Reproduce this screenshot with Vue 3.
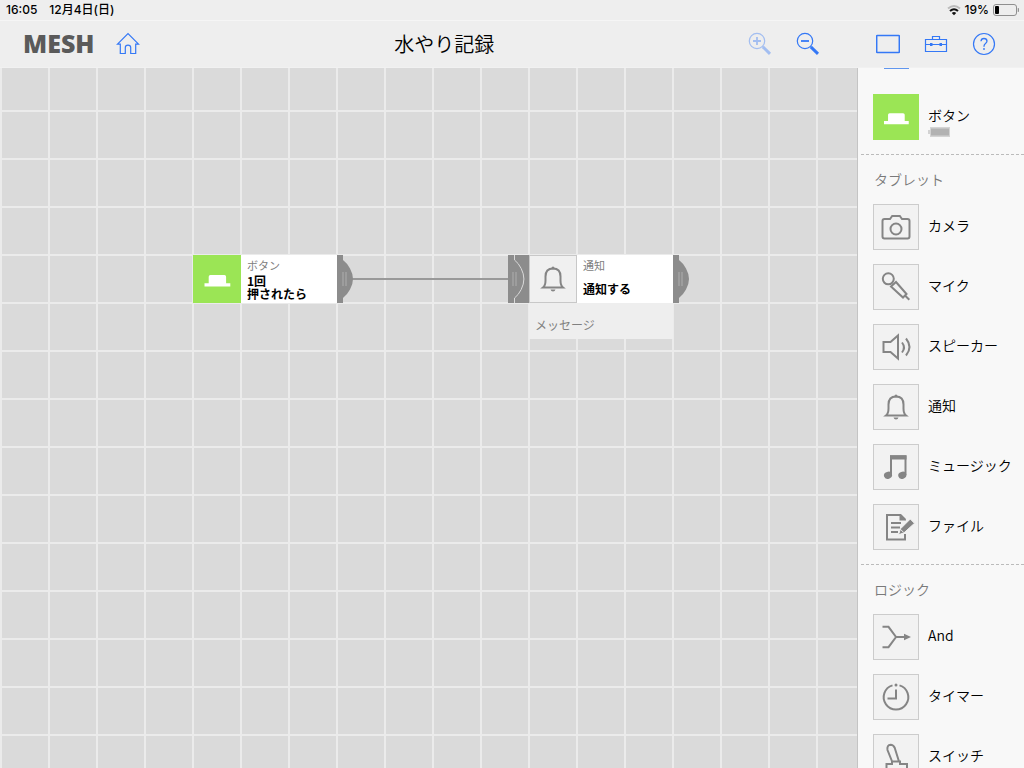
<script setup>
import { ref } from 'vue'

const sections = ref([
  {
    title: 'タブレット',
    items: [
      { icon: 'camera', name: 'カメラ' },
      { icon: 'mic', name: 'マイク' },
      { icon: 'speaker', name: 'スピーカー' },
      { icon: 'bell', name: '通知' },
      { icon: 'music', name: 'ミュージック' },
      { icon: 'file', name: 'ファイル' }
    ]
  },
  {
    title: 'ロジック',
    items: [
      { icon: 'and', name: 'And' },
      { icon: 'timer', name: 'タイマー' },
      { icon: 'switch', name: 'スイッチ' }
    ]
  }
])
</script>

<template>
  <div class="app">
    <!-- Shared symbols -->
    <svg class="symbols" width="0" height="0" aria-hidden="true">
      <symbol id="button-tag" viewBox="0 0 48 48">
        <path d="M11.500 28.300h4.200v-6.600q0-1.700 1.700-1.700h14q1.700 0 1.700 1.700v6.600h4.200v3.200h-25.800z" fill="#fff" />
      </symbol>
      <symbol id="camera" viewBox="0 0 46 46">
        <path d="M11.500 15h5.500l2.200-3h7.600l2.200 3h5.500q2 0 2 2v15.500q0 2-2 2h-23q-2 0-2-2V17q0-2 2-2z" />
        <circle cx="23" cy="25" r="5.500" />
      </symbol>
      <symbol id="mic" viewBox="0 0 46 46">
        <circle cx="15.300" cy="14.800" r="5.500" />
        <path d="M23 18l10.500 12-3.500 3.500-12-11zM32 31.500l4.300 4.300" />
      </symbol>
      <symbol id="speaker" viewBox="0 0 46 46">
        <path d="M10.500 18h7l7.500-6.500v23L17.500 28h-7zM29 18.500q4 5 0 10M33 14.500q7 8.500 0 17" />
      </symbol>
      <symbol id="bell" viewBox="0 0 46 46">
        <path d="M13 31.500q2.500-2 2.500-7v-4q0-8 7.500-8t7.500 8v4q0 5 2.500 7z" />
        <path d="M20.500 33.500h5q-.500 2-2.500 2t-2.500-2z" fill="#858585" stroke="none" />
        <circle cx="23" cy="12" r="1.500" fill="#858585" stroke="none" />
      </symbol>
      <symbol id="music" viewBox="0 0 46 46">
        <path d="M18 31V12.500h14.500V31M18 14h14.500" />
        <g fill="#858585" stroke="none">
          <path d="M17 11.200h16.500v4.300H17z" />
          <ellipse cx="15" cy="31.300" rx="4.100" ry="3.500" transform="rotate(-18 15 31.300)" />
          <ellipse cx="29.300" cy="31.300" rx="4.100" ry="3.500" transform="rotate(-18 29.300 31.300)" />
        </g>
      </symbol>
      <symbol id="file" viewBox="0 0 46 46">
        <path d="M32 15.500L27.500 11H14v24.500h18V30M18 19h10M18 23.500h9M18 28h7" />
        <path d="M26.500 10.500h1.500l5 5v1h-6.500z" fill="#858585" stroke="none" />
        <path d="M37.300 15l4.200 4.300-10.500 9.500-5.500 2 2-6z" fill="#858585" stroke="#f2f2f2" stroke-width="1" />
        <path d="M27.500 25.300l3 3" stroke="#f2f2f2" stroke-width="1" />
      </symbol>
      <symbol id="and" viewBox="0 0 46 46">
        <path d="M9.500 12.800h6L23 23l-7.500 10.200h-6M23 23h8" />
        <path d="M31 19.800l7 3.200-7 3.200z" fill="#858585" stroke="none" />
      </symbol>
      <symbol id="timer" viewBox="0 0 46 46">
        <path d="M19.500 11.400a12.300 12.300 0 1 0 7 0M23 15.500v9h-8.500" />
        <circle cx="23" cy="11" r="1.500" fill="#858585" stroke="none" />
      </symbol>
      <symbol id="switch" viewBox="0 0 46 46">
        <path d="M19.300 28l-4.800-12q-.800-5 3.200-5.200 2.500 0 4 3L26 27.500M13.500 46V30h5.500v-2.500h8V30H34v16" />
      </symbol>
      <symbol id="plug" viewBox="0 0 16 48">
        <path d="M0 0h6v5q4 3 7 8.500t3 10.500-3 10.500-7 8.500v5H0z" fill="#8c8c8c" />
        <path d="M6 17v14M9 17v14" stroke="#a3a3a3" stroke-width="1.500" />
      </symbol>
    </svg>

    <div class="status">
      <div class="status-side">
        <span>16:05</span>
        <span>12月4日(日)</span>
      </div>
      <div class="status-side right">
        <svg width="14" height="12" viewBox="0 0 14 12" fill="none">
          <path d="M1 4.500q6-5 12 0" stroke="#bbb" stroke-width="2" />
          <path d="M3 7q4-3.600 8 0" stroke="#111" stroke-width="2" />
          <path d="M4.800 9q2.200-1.800 4.400 0L7 11.300z" fill="#111" />
        </svg>
        <span>19%</span>
        <svg width="26" height="12" viewBox="0 0 26 12">
          <rect x="0.500" y="0.500" width="23" height="11" rx="2.500" fill="none" stroke="#8f8f8f" />
          <rect x="2" y="2" width="4" height="8" rx="1" fill="#000" />
          <path d="M25 4v4q1-.500 1-2t-1-2z" fill="#8f8f8f" stroke="#8f8f8f" stroke-width=".5" />
        </svg>
      </div>
    </div>

    <header class="header">
      <div class="header-side">
        <span class="logo">MESH</span>
        <button class="tool" aria-label="ホーム">
          <svg width="24" height="24" viewBox="0 0 24 24">
            <path d="M1.500 12.200L12 1.700l10.500 10.500h-2.800v9.300h-5V15.500q0-2.300-2.700-2.300t-2.700 2.300v6h-5v-9.300z" />
          </svg>
        </button>
      </div>
      <h1 class="title">水やり記録</h1>
      <div class="header-side right">
        <button class="tool" aria-label="拡大" disabled>
          <svg width="24" height="24" viewBox="0 0 24 24">
            <circle cx="9" cy="9" r="7.700" />
            <path d="M9 5v8M5 9h8" stroke-width="1.800" />
            <path d="M14.800 14.800l7.200 7" stroke-width="3" />
          </svg>
        </button>
        <button class="tool" aria-label="縮小">
          <svg width="24" height="24" viewBox="0 0 24 24">
            <circle cx="9" cy="9" r="7.700" />
            <path d="M5 9h8" stroke-width="1.800" />
            <path d="M14.800 14.800l7.200 7" stroke-width="3" />
          </svg>
        </button>
        <button class="tool spaced" aria-label="キャンバス">
          <svg width="24" height="24" viewBox="0 0 24 24">
            <rect x="0.700" y="3.500" width="22.600" height="17" rx="0.500" stroke-width="1.500" />
          </svg>
        </button>
        <button class="tool" aria-label="ツールボックス">
          <svg width="24" height="24" viewBox="0 0 24 24">
            <path d="M1.500 7.500h21v12h-21zM8.500 7.500v-3h7v3M1.500 12.500h21" />
            <path d="M6 11h2.500v3H6zM15.500 11H18v3h-2.500z" fill="#3478f6" stroke="none" />
          </svg>
        </button>
        <button class="tool" aria-label="ヘルプ">
          <svg width="24" height="24" viewBox="0 0 24 24">
            <circle cx="12" cy="12" r="10.500" />
            <path d="M9 9.300q.200-2.800 3-2.800t3 2.600q0 1.400-1.500 2.500t-1.500 2.600v.6" stroke-width="1.300" />
            <circle cx="12" cy="17" r="0.900" fill="#3478f6" stroke="none" />
          </svg>
        </button>
      </div>
    </header>

    <main class="main">
      <div class="canvas">
        <div class="wire"></div>

        <div class="node button-node">
          <div class="node-row">
            <div class="node-icon green">
              <svg width="48" height="48"><use href="#button-tag" /></svg>
            </div>
            <div class="node-text">
              <span class="node-kind">ボタン</span>
              <strong>1回<br>押されたら</strong>
            </div>
            <svg class="plug" width="16" height="48"><use href="#plug" /></svg>
          </div>
        </div>

        <div class="node notice-node">
          <div class="node-row">
            <svg class="socket" width="21" height="48" viewBox="0 0 21 48">
              <path d="M0 0h21v48H0z" fill="#8c8c8c" />
              <path d="M6.500 0v5q4 3 6.700 8.500t2.700 10.500-2.700 10.500-6.700 8.500v5" fill="none" stroke="#dadada" />
              <path d="M5 17v14M8 17v14" stroke="#a3a3a3" stroke-width="1.500" />
            </svg>
            <div class="node-icon gray">
              <svg class="line-icon" width="46" height="46"><use href="#bell" /></svg>
            </div>
            <div class="node-text">
              <span class="node-kind">通知</span>
              <strong class="single">通知する</strong>
            </div>
            <svg class="plug" width="16" height="48"><use href="#plug" /></svg>
          </div>
          <div class="node-param">メッセージ</div>
        </div>
      </div>

      <aside class="palette">
        <div class="add-edge"></div>
        <div class="item first">
          <div class="item-icon green">
            <svg width="46" height="46"><use href="#button-tag" /></svg>
          </div>
          <div class="item-name">
            <span>ボタン</span>
            <svg class="battery" width="22" height="10" viewBox="0 0 22 10">
              <path d="M2 0h20v10H2V7H0V3h2z" fill="#d3d3d3" />
              <path d="M3 1.500h18v7H3z" fill="#b2b2b2" />
            </svg>
          </div>
        </div>
        <section v-for="section in sections" :key="section.title" class="group">
          <h2>{{ section.title }}</h2>
          <div v-for="item in section.items" :key="item.name" class="item">
            <div class="item-icon">
              <svg class="line-icon" width="46" height="46"><use :href="'#' + item.icon" /></svg>
            </div>
            <span class="item-name">{{ item.name }}</span>
          </div>
        </section>
      </aside>
    </main>
  </div>
</template>

<style>
body {
  margin: 0;
}
</style>

<style scoped>
.app {
  display: flex;
  flex-direction: column;
  height: 100vh;
  overflow: hidden;
  background: #eee;
  color: #000;
  font-family: "Noto Sans CJK JP", sans-serif;
}

svg {
  display: block;
  flex: none;
}

.symbols {
  position: absolute;
}

.status {
  display: flex;
  justify-content: space-between;
  align-items: center;
  height: 20px;
  padding: 0 5px 0 6px;
  font: 500 12px/20px Inter, "Noto Sans CJK JP", sans-serif;
}

.status-side {
  display: flex;
  align-items: center;
  gap: 12px;
}

.status-side.right {
  gap: 4px;
}

.header {
  display: flex;
  justify-content: space-between;
  align-items: center;
  box-sizing: border-box;
  height: 48px;
  padding: 0 28px 0 23px;
  border-top: 1px solid #f5f5f5;
  border-bottom: 1px solid #f1f1f1;
}

.header-side {
  display: flex;
  align-items: center;
  gap: 22px;
}

.header-side.right {
  gap: 24px;
}

.logo {
  padding-bottom: 2px;
  color: #5a5a5a;
  font: 900 25px/44px "Noto Sans", sans-serif;
}

.title {
  margin: 0;
  font-size: 20px;
  font-weight: 350;
  line-height: 46px;
}

.tool {
  padding: 0;
  border: 0;
  background: none;
}

.tool svg {
  fill: none;
  stroke: #3478f6;
  stroke-width: 1.2;
}

.tool:disabled {
  opacity: 0.4;
}

.spaced {
  margin-left: 32px;
}

.main {
  display: flex;
  flex: 1;
  min-height: 0;
}

.canvas {
  position: relative;
  flex: 1;
  background-color: #dadada;
  background-image:
    linear-gradient(90deg, #ebebeb 2px, transparent 2px),
    linear-gradient(#ebebeb 2px, transparent 2px);
  background-position: 0 42px;
  background-size: 48px 48px;
}

.wire {
  position: absolute;
  left: 352px;
  top: 210px;
  width: 156px;
  height: 2px;
  background: #999;
}

.node {
  position: absolute;
  top: 187px;
}

.button-node {
  left: 193px;
}

.notice-node {
  left: 508px;
}

.node-row {
  display: flex;
}

.node-icon {
  box-sizing: border-box;
  width: 48px;
  height: 48px;
}

.green {
  background: #9be555;
}

.gray {
  border: 1px solid #c8c8c8;
  background: #f0f0f0;
}

.line-icon {
  fill: none;
  stroke: #858585;
  stroke-width: 2;
}

.node-text {
  box-sizing: border-box;
  width: 96px;
  height: 48px;
  padding: 4px 0 0 6px;
  background: #fff;
  font-size: 12px;
  line-height: 13px;
}

.node-text strong {
  display: block;
  margin-top: 2px;
}

.node-text .single {
  margin-top: 10px;
}

.node-kind {
  display: block;
  color: #808080;
  font-size: 11px;
}

.node-param {
  margin-left: 21px;
  margin-right: 16px;
  padding: 10px 6px 2px;
  background: #eee;
  color: #808080;
  font-size: 12px;
  line-height: 24px;
}

.palette {
  box-sizing: border-box;
  width: 167px;
  overflow-y: auto;
  scrollbar-width: none;
  border-left: 1px solid #c4c4c4;
  background: #f8f8f8;
}

.add-edge {
  width: 25px;
  height: 1px;
  margin: 0 0 25px 26px;
  background: #6096ee;
}

.item {
  display: flex;
  align-items: center;
  gap: 9px;
  margin: 0 0 14px 15px;
}

.item-icon {
  box-sizing: border-box;
  width: 46px;
  height: 46px;
  border: 1px solid #ccc;
  background: #f2f2f2;
}

.item-icon.green {
  border: 0;
  background: #9be555;
}

.item-icon .line-icon {
  margin: -1px;
}

.item-name {
  padding-bottom: 4px;
  font-size: 14px;
  font-weight: 350;
  line-height: 20px;
}

.first .item-name {
  padding: 8px 0 0;
}

.battery {
  margin-top: 2px;
}

.group {
  margin-left: 3px;
  border-top: 1px dashed #bbb;
}

.group .item {
  margin-left: 12px;
}

.group h2 {
  margin: 0 0 0 13px;
  color: #7a7a7a;
  font-size: 14px;
  font-weight: 350;
  line-height: 49px;
}
</style>
